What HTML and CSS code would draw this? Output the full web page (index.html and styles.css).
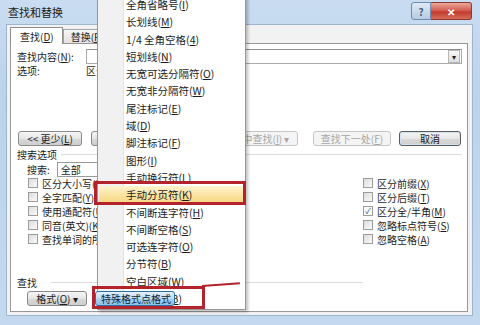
FILE: index.html
```html
<!doctype html>
<html lang="zh-CN">
<head>
  <title>查找和替换</title>
  <meta charset="utf-8">
  <link rel="stylesheet" href="styles.css">
</head>
<body>

<div class="window">
  <div class="titlebar">
    <span class="title">查找和替换</span>
    <div class="caption-btns">
      <span class="cap help">?</span>
      <span class="cap close">&#x2715;</span>
    </div>
  </div>

  <div class="client">
    <div class="tabs">
      <span class="tab active">查找(<u>D</u>)</span>
      <span class="tab">替换(<u>P</u>)</span>
    </div>

    <div class="panel">
      <div class="row find-row">
        <span class="label">查找内容(<u>N</u>):</span>
        <span class="input"><span class="drop">&#9662;</span></span>
      </div>
      <div class="row">
        <span class="label">选项:</span>
        <span>区分全/半角</span>
      </div>

      <div class="btn-row">
        <span class="btn less">&lt;&lt; 更少(<u>L</u>)</span>
        <span class="btn b2">阅读突出显示(<u>R</u>) &#9662;</span>
        <span class="btn dis b3">在以下项中查找(<u>I</u>) &#9662;</span>
        <span class="btn dis b4">查找下一处(<u>F</u>)</span>
        <span class="btn default b5">取消</span>
      </div>

      <div class="group-title">
        <span>搜索选项</span>
        <span class="rule"></span>
      </div>

      <div class="row search-row">
        <span>搜索:</span>
        <span class="select">全部</span>
      </div>

      <div class="checks">
        <div class="col">
          <label class="chk"><span class="box"></span>区分大小写(<u>H</u>)</label>
          <label class="chk"><span class="box"></span>全字匹配(<u>Y</u>)</label>
          <label class="chk"><span class="box"></span>使用通配符(<u>U</u>)</label>
          <label class="chk"><span class="box"></span>同音(英文)(<u>K</u>)</label>
          <label class="chk"><span class="box"></span>查找单词的所有形式(英文)(<u>W</u>)</label>
        </div>
        <div class="col">
          <label class="chk"><span class="box"></span>区分前缀(<u>X</u>)</label>
          <label class="chk"><span class="box"></span>区分后缀(<u>T</u>)</label>
          <label class="chk"><span class="box on">&#10003;</span>区分全/半角(<u>M</u>)</label>
          <label class="chk"><span class="box"></span>忽略标点符号(<u>S</u>)</label>
          <label class="chk"><span class="box"></span>忽略空格(<u>A</u>)</label>
        </div>
      </div>

      <div class="group-title find-title">
        <span>查找</span>
        <span class="rule short"></span>
      </div>

      <div class="btn-row bottom-row">
        <span class="btn fmt">格式(<u>O</u>) &#9662;</span>
        <span class="btn pressed">特殊格式点格式</span>
      </div>
    </div>
  </div>

  <!-- special character menu, drawn over the dialog -->
  <ul class="menu">
    <li>全角省略号(<u>I</u>)</li>
    <li>长划线(<u>M</u>)</li>
    <li>1/4 全角空格(<u>4</u>)</li>
    <li>短划线(<u>N</u>)</li>
    <li>无宽可选分隔符(<u>O</u>)</li>
    <li>无宽非分隔符(<u>W</u>)</li>
    <li>尾注标记(<u>E</u>)</li>
    <li>域(<u>D</u>)</li>
    <li>脚注标记(<u>F</u>)</li>
    <li>图形(<u>I</u>)</li>
    <li>手动换行符(<u>L</u>)</li>
    <li class="hot">手动分页符(<u>K</u>)</li>
    <li>不间断连字符(<u>H</u>)</li>
    <li>不间断空格(<u>S</u>)</li>
    <li>可选连字符(<u>O</u>)</li>
    <li>分节符(<u>B</u>)</li>
    <li>空白区域(<u>W</u>)</li>
    <li>分栏符号(<u>B</u>)</li>
  </ul>

  <div class="mark mark-item"></div>
  <div class="mark mark-btn"></div>
  <div class="mark-tail"></div>
</div>

</body>
</html>
```

FILE: styles.css
```css
html, body {
  margin: 0;
  padding: 0;
}

body {
  background: #c3d8ef;
  font-family: "Noto Sans CJK SC", "Liberation Sans", sans-serif;
  font-size: 10px;
  color: #1c1c1c;
}

u {
  text-decoration: underline;
}

.window {
  position: relative;
  width: 480px;
  height: 325px;
  overflow: hidden;
  background: linear-gradient(#c9dcf1, #bcd3ec 30%, #c4d9ef 100%);
}

.titlebar {
  display: flex;
  height: 24px;
  padding-left: 8px;
  align-items: center;
}

.title {
  font-size: 11px;
  color: #1a1a1a;
}

.caption-btns {
  display: flex;
  margin-left: auto;
  margin-right: 8px;
  align-self: flex-start;
  margin-top: 2px;
}

.cap {
  display: flex;
  height: 16px;
  align-items: center;
  justify-content: center;
  border: 1px solid #6d8bb0;
  font-size: 10px;
  font-weight: bold;
}

.help {
  width: 18px;
  border-radius: 3px 0 0 3px;
  background: linear-gradient(#dfeaf6, #b6cbe3);
  color: #4a5f7c;
}

.close {
  width: 40px;
  border-left: none;
  border-radius: 0 3px 3px 0;
  border-color: #8e3a33;
  background: linear-gradient(#e9a89c, #d2584a 50%, #c4392a 55%, #d56d58);
  color: #fff;
}

.client {
  height: 292px;
  margin: 0 7px 0 6px;
  padding: 2px 4px 0 3px;
  box-sizing: border-box;
  border: 1px solid #9fb5d0;
  background: #f2f2f2;
}

.tabs {
  display: flex;
  height: 16px;
  align-items: flex-end;
}

.tab {
  display: flex;
  height: 13px;
  padding: 0 7px;
  align-items: center;
  border: 1px solid #a5a5a5;
  border-bottom: none;
  background: linear-gradient(#f6f6f6, #e2e2e2);
}

.tab.active {
  height: 16px;
  margin-bottom: -1px;
  position: relative;
  z-index: 1;
  padding: 0 8px 0 9px;
  background: #fff;
  border-color: #8e8e8e;
}

.panel {
  height: 269px;
  padding: 0 5px 0 6px;
  box-sizing: border-box;
  border: 1px solid #989898;
  background: #fff;
}

.row {
  display: flex;
  height: 14px;
  align-items: center;
}

.find-row {
  margin-top: 5px;
}

.label {
  width: 69px;
  flex: none;
}

.input {
  display: flex;
  flex: 1;
  height: 13px;
  justify-content: flex-end;
  align-items: center;
  border: 1px solid #ababab;
  border-top-color: #8f8f8f;
}

.drop {
  width: 10px;
  height: 11px;
  margin-right: 1px;
  border: 1px solid #b6b6b6;
  background: linear-gradient(#f8f8f8, #dedede);
  font-size: 8px;
  line-height: 11px;
  text-align: center;
}

.btn-row {
  display: flex;
  height: 15px;
  margin-top: 54px;
}

.btn {
  display: flex;
  height: 15px;
  box-sizing: border-box;
  align-items: center;
  justify-content: center;
  border: 1px solid #8a8a8a;
  border-radius: 3px;
  background: linear-gradient(#f6f6f6, #e6e6e6 50%, #d8d8d8 52%, #cfcfcf);
  white-space: nowrap;
  overflow: hidden;
}

.less {
  width: 64px;
  margin-left: 1px;
}

.b2 {
  width: 100px;
  margin-left: 9px;
}

.b3 {
  width: 104px;
  margin-left: 3px;
}

.b4 {
  width: 78px;
  margin-left: 15px;
}

.b5 {
  width: 62px;
  margin-left: 8px;
}

.dis {
  color: #a6a6a6;
  border-color: #c5c5c5;
  background: #f4f4f4;
}

.default {
  border-color: #5b5b5b;
  box-shadow: inset 0 0 0 1px #cfe3f3;
}

.group-title {
  display: flex;
  height: 14px;
  margin-top: 1px;
  align-items: center;
}

.rule {
  flex: 1;
  height: 1px;
  margin-left: 4px;
  background: #dcdcdc;
}

.rule.short {
  flex: none;
  width: 312px;
  margin-left: 14px;
}

.search-row {
  margin-top: 1px;
  padding-left: 10px;
}

.select {
  width: 50px;
  height: 13px;
  margin-left: 7px;
  padding-left: 3px;
  border: 1px solid #9a9a9a;
  line-height: 13px;
}

.checks {
  display: grid;
  grid-template-columns: 335px 1fr;
  padding-left: 11px;
}

.col {
  display: flex;
  flex-direction: column;
}

.chk {
  display: flex;
  height: 14px;
  align-items: center;
  white-space: nowrap;
}

.box {
  width: 8px;
  height: 8px;
  margin-right: 4px;
  border: 1px solid #9c9c9c;
  background: linear-gradient(135deg, #dcdcdc, #fafafa);
  font-size: 8px;
  line-height: 8px;
  text-align: center;
  color: #2b4f86;
}

.box.on {
  background: #fbfbfb;
}

.find-title {
  margin-top: 29px;
}

.bottom-row {
  margin-top: 2px;
}

.fmt {
  width: 60px;
  margin-left: 10px;
}

.pressed {
  width: 80px;
  margin-left: 8px;
  position: relative;
  z-index: 3;
  justify-content: flex-start;
  padding-left: 5px;
  border-color: #2f6ea4;
  background: linear-gradient(#e4f2fc, #bcdcf5 50%, #a5d0f1 52%, #8fc3ea);
  color: #10263d;
}

.menu {
  position: absolute;
  left: 97px;
  top: -5px;
  width: 149px;
  height: 315px;
  margin: 0;
  padding: 0;
  list-style: none;
  box-sizing: border-box;
  border: 1px solid #989898;
  background: linear-gradient(90deg, #f1f1f1 0, #f1f1f1 25px, #e2e3e3 25px, #e2e3e3 26px, #fff 26px);
  box-shadow: 2px 2px 3px rgba(0, 0, 0, 0.25);
  font-size: 10.5px;
  z-index: 2;
}

.menu li {
  height: 17.3px;
  line-height: 17.3px;
  padding-left: 28px;
  white-space: nowrap;
}

.menu li.hot {
  margin: 0 1px;
  padding-left: 27px;
  background: linear-gradient(#fdf3cf, #fbe3a1 50%, #f8d57f);
  border-radius: 2px;
}

.mark {
  position: absolute;
  border: 3px solid #b3232b;
  z-index: 4;
}

.mark-item {
  left: 94px;
  top: 181px;
  width: 146px;
  height: 18px;
}

.mark-btn {
  left: 92px;
  top: 286px;
  width: 107px;
  height: 17px;
}

.mark-tail {
  position: absolute;
  left: 202px;
  top: 285px;
  width: 38px;
  height: 2px;
  background: #b3232b;
  transform: rotate(-4deg);
  transform-origin: left center;
  z-index: 4;
}
```
